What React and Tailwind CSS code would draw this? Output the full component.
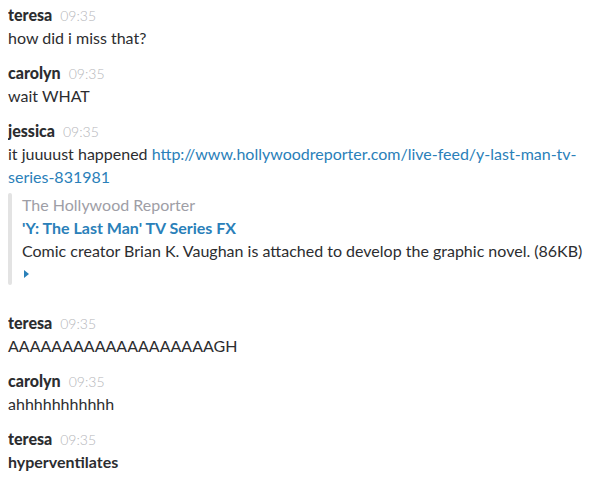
const messages = [
  { name: 'teresa', time: '09:35', text: 'how did i miss that?' },
  { name: 'carolyn', time: '09:35', text: 'wait WHAT' },
  {
    name: 'jessica',
    time: '09:35',
    text: 'it juuuust happened ',
    link: 'http://www.hollywoodreporter.com/live-feed/y-last-man-tv-series-831981',
    attachment: {
      service: 'The Hollywood Reporter',
      title: "'Y: The Last Man' TV Series FX",
      body: 'Comic creator Brian K. Vaughan is attached to develop the graphic novel. (86KB)',
    },
  },
  { name: 'teresa', time: '09:35', text: 'AAAAAAAAAAAAAAAAAAAGH' },
  { name: 'carolyn', time: '09:35', text: 'ahhhhhhhhhhh' },
  { name: 'teresa', time: '09:35', text: 'hyperventilates', bold: true },
];

function Message({ msg }) {
  return (
    <div>
      <div className="h-[22px] overflow-hidden text-[16px] leading-[22px]">
        <span className="font-black text-[#2c2d30]">{msg.name}</span>
        <span className="ml-[8px] text-[14px] leading-none font-light text-[#b5b6ba]">{msg.time}</span>
      </div>
      <div className={`text-[16px] leading-[23px] text-[#2c2d30] ${msg.bold ? 'font-bold' : ''}`}>
        {msg.text}
        {msg.link && (
          <a className="text-[#2a80b9]" href="#">
            {msg.link}
          </a>
        )}
      </div>
      {msg.attachment && (
        <div className="mt-[5px] mb-[14px] flex">
          <div className="w-1 shrink-0 rounded bg-[#e3e3e3]" />
          <div className="pl-[10px] text-[16px] leading-[23px]">
            <div className="text-[#9e9ea6]">{msg.attachment.service}</div>
            <div className="font-bold text-[#2a80b9]">{msg.attachment.title}</div>
            <div className="text-[#2c2d30]">{msg.attachment.body}</div>
            <div className="flex h-[23px] items-center pl-[2px]">
              <svg width="5" height="8" viewBox="0 0 5 8">
                <path d="M0 0 L5 4 L0 8 Z" fill="#2a80b9" />
              </svg>
            </div>
          </div>
        </div>
      )}
    </div>
  );
}

export default function App() {
  return (
    <div
      className="flex min-h-screen w-[601px] flex-col gap-[13px] bg-white px-2 pt-1"
      style={{ fontFamily: 'Lato, "Open Sans", sans-serif' }}
    >
      {messages.map((msg, i) => (
        <Message key={i} msg={msg} />
      ))}
    </div>
  );
}
